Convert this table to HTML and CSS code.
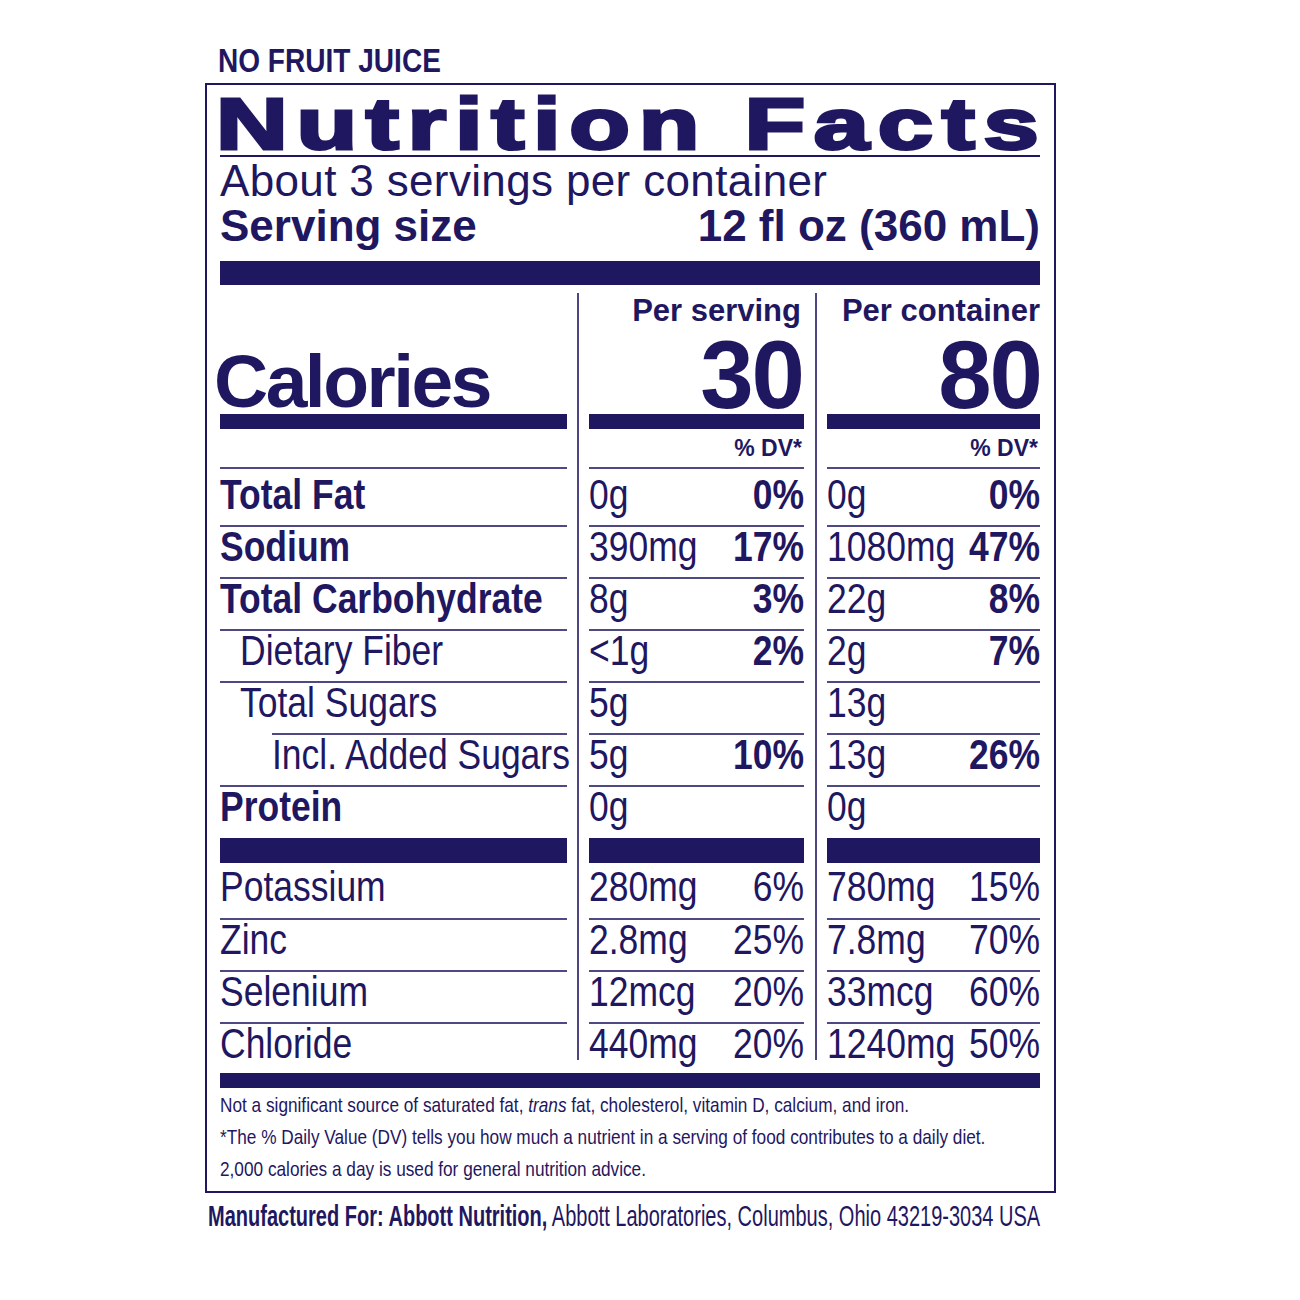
FILE: index.html
```html
<!DOCTYPE html>
<html lang="en">
<head>
    <meta charset="utf8"/>
    <title>Nutrition Facts</title>
    <meta name="viewport" content="width=device-width, initial-scale=1.0"/>
    <link rel="stylesheet" href="styles.css">
</head>

<body>
<div class="label">
    <p class="claim"><span>NO FRUIT JUICE</span></p>

    <div class="panel">
        <h1 class="title"><span>Nutrition Facts</span></h1>
        <p class="servings">About 3 servings per container</p>
        <div class="size">
            <span>Serving size</span>
            <span>12 fl oz (360 mL)</span>
        </div>
        <div class="bar bar-top"></div>

        <div class="columns">
            <!-- nutrient names -->
            <div class="col col-name">
                <div class="head head-name"><span class="calories">Calories</span></div>
                <div class="bar bar-cal"></div>
                <div class="dv"></div>
                <div class="row first strong"><div class="in">Total Fat</div></div>
                <div class="row strong"><div class="in">Sodium</div></div>
                <div class="row strong"><div class="in">Total Carbohydrate</div></div>
                <div class="row sub"><div class="in">Dietary Fiber</div></div>
                <div class="row sub"><div class="in">Total Sugars</div></div>
                <div class="row subsub"><div class="in">Incl. Added Sugars</div></div>
                <div class="row protein strong"><div class="in">Protein</div></div>
                <div class="bar bar-mid"></div>
                <div class="row potassium"><div class="in">Potassium</div></div>
                <div class="row"><div class="in">Zinc</div></div>
                <div class="row"><div class="in">Selenium</div></div>
                <div class="row last"><div class="in">Chloride</div></div>
            </div>

            <!-- per serving -->
            <div class="col col-amt">
                <div class="head">
                    <span class="per">Per serving</span>
                    <span class="kcal">30</span>
                </div>
                <div class="bar bar-cal"></div>
                <div class="dv">% DV*</div>
                <div class="row first"><div class="in"><span>0g</span><b>0%</b></div></div>
                <div class="row"><div class="in"><span>390mg</span><b>17%</b></div></div>
                <div class="row"><div class="in"><span>8g</span><b>3%</b></div></div>
                <div class="row"><div class="in"><span>&lt;1g</span><b>2%</b></div></div>
                <div class="row"><div class="in"><span>5g</span></div></div>
                <div class="row"><div class="in"><span>5g</span><b>10%</b></div></div>
                <div class="row protein"><div class="in"><span>0g</span></div></div>
                <div class="bar bar-mid"></div>
                <div class="row potassium"><div class="in"><span>280mg</span><span>6%</span></div></div>
                <div class="row"><div class="in"><span>2.8mg</span><span>25%</span></div></div>
                <div class="row"><div class="in"><span>12mcg</span><span>20%</span></div></div>
                <div class="row last"><div class="in"><span>440mg</span><span>20%</span></div></div>
            </div>

            <!-- per container -->
            <div class="col col-cont">
                <div class="head">
                    <span class="per">Per container</span>
                    <span class="kcal">80</span>
                </div>
                <div class="bar bar-cal"></div>
                <div class="dv">% DV*</div>
                <div class="row first"><div class="in"><span>0g</span><b>0%</b></div></div>
                <div class="row"><div class="in"><span>1080mg</span><b>47%</b></div></div>
                <div class="row"><div class="in"><span>22g</span><b>8%</b></div></div>
                <div class="row"><div class="in"><span>2g</span><b>7%</b></div></div>
                <div class="row"><div class="in"><span>13g</span></div></div>
                <div class="row"><div class="in"><span>13g</span><b>26%</b></div></div>
                <div class="row protein"><div class="in"><span>0g</span></div></div>
                <div class="bar bar-mid"></div>
                <div class="row potassium"><div class="in"><span>780mg</span><span>15%</span></div></div>
                <div class="row"><div class="in"><span>7.8mg</span><span>70%</span></div></div>
                <div class="row"><div class="in"><span>33mcg</span><span>60%</span></div></div>
                <div class="row last"><div class="in"><span>1240mg</span><span>50%</span></div></div>
            </div>
        </div>

        <div class="bar bar-bottom"></div>

        <div class="notes">
            <div class="in">
                <p>Not a significant source of saturated fat, <i>trans</i> fat, cholesterol, vitamin D, calcium, and iron.</p>
                <p>*The % Daily Value (DV) tells you how much a nutrient in a serving of food contributes to a daily diet.</p>
                <p>2,000 calories a day is used for general nutrition advice.</p>
            </div>
        </div>
    </div>

    <p class="maker"><span><b>Manufactured For: Abbott Nutrition,</b> Abbott Laboratories, Columbus, Ohio 43219-3034 USA</span></p>
</div>
</body>
</html>
```

FILE: styles.css
```css
* {
    box-sizing: border-box;
}

body {
    margin: 0;
    background: #ffffff;
    color: #1f175f;
    font-family: "Liberation Sans", Arial, sans-serif;
}

p {
    margin: 0;
}

/* no narrow face installed, so condensed text is Liberation Sans squeezed */
.in {
    width: 121.95%;
    transform: scaleX(0.82);
    transform-origin: 0 0;
    white-space: nowrap;
}

.label {
    width: 851px;
    margin-left: 205px;
    padding-top: 41px;
    overflow: hidden;
}

.claim {
    padding-left: 13px;
    font-weight: bold;
    font-size: 33px;
    line-height: 40px;
    margin-bottom: 2px;
    white-space: nowrap;
}

.claim span {
    display: inline-block;
    transform: scaleX(0.85);
    transform-origin: 0 50%;
}

.panel {
    border: 2px solid #1f175f;
    padding: 0 14px 6px 13px;
}

/* header */

.title {
    margin: 0;
    padding-top: 9px;
    font-size: 72px;
    line-height: 61px;
    font-weight: bold;
    border-bottom: 2px solid #1f175f;
    white-space: nowrap;
}

.title span {
    display: inline-block;
    margin-left: -4px;
    letter-spacing: 6.3px;
    -webkit-text-stroke: 3px #1f175f;
    transform: scaleX(1.38);
    transform-origin: 0 50%;
}

.servings {
    font-size: 44px;
    line-height: 48px;
    letter-spacing: 0.35px;
}

.size {
    display: flex;
    justify-content: space-between;
    font-size: 44px;
    font-weight: bold;
    line-height: 42px;
}

.bar {
    background: #1f175f;
}

.bar-top {
    margin-top: 14px;
    height: 24px;
}

/* three columns */

.columns {
    display: flex;
    margin-top: 8px;
}

.col {
    font-size: 42px;
}

.col-name {
    width: 347px;
    margin-right: 10px;
}

.col-amt {
    width: 227px;
    margin-right: 11px;
    padding-left: 10px;
    border-left: 2px solid #4d4680;
}

.col-cont {
    width: 225px;
    padding-left: 10px;
    border-left: 2px solid #4d4680;
}

.head {
    height: 121px;
    padding-top: 2px;
    display: flex;
    flex-direction: column;
    justify-content: space-between;
    align-items: flex-end;
    font-weight: bold;
}

.head-name {
    align-items: flex-start;
    justify-content: flex-end;
}

.calories {
    margin-left: -6px;
    font-size: 75px;
    line-height: 66px;
    letter-spacing: -2.5px;
}

.per {
    font-size: 31px;
    line-height: 31px;
}

.col-amt .per {
    margin-right: 3px;
}

.kcal {
    font-size: 96px;
    line-height: 78px;
    letter-spacing: -2px;
    margin-right: -1px;
}

.col-amt .kcal {
    margin-right: 1px;
}

.bar-cal {
    height: 15px;
}

.dv {
    height: 38px;
    font-weight: bold;
    font-size: 23px;
    line-height: 38px;
    text-align: right;
    padding-right: 2px;
}

.row {
    height: 52px;
    padding-top: 1px;
    line-height: 38px;
    border-top: 2px solid #4f4983;
}

.row .in {
    display: flex;
    justify-content: space-between;
    width: 118.34%;
    transform: scaleX(0.845);
}

.row b {
    font-weight: bold;
}

.strong {
    font-weight: bold;
}

.sub {
    padding-left: 20px;
}

.subsub {
    margin-left: 52px;
}

.row.first {
    height: 58px;
    padding-top: 7px;
}

.row.protein {
    height: 53px;
}

.bar-mid {
    height: 25px;
}

.row.potassium {
    height: 55px;
    padding-top: 5px;
    border-top: none;
}

.row.last {
    height: 38px;
}

.bar-bottom {
    margin-top: 13px;
    height: 15px;
}

/* footnotes */

.notes {
    margin-top: 1px;
    font-size: 21px;
    line-height: 32px;
    height: 96px;
}

.maker {
    margin-top: 6px;
    padding-left: 3px;
    font-size: 30px;
    line-height: 34px;
    white-space: nowrap;
}

.maker span {
    display: inline-block;
    transform: scaleX(0.667);
    transform-origin: 0 50%;
}
```
